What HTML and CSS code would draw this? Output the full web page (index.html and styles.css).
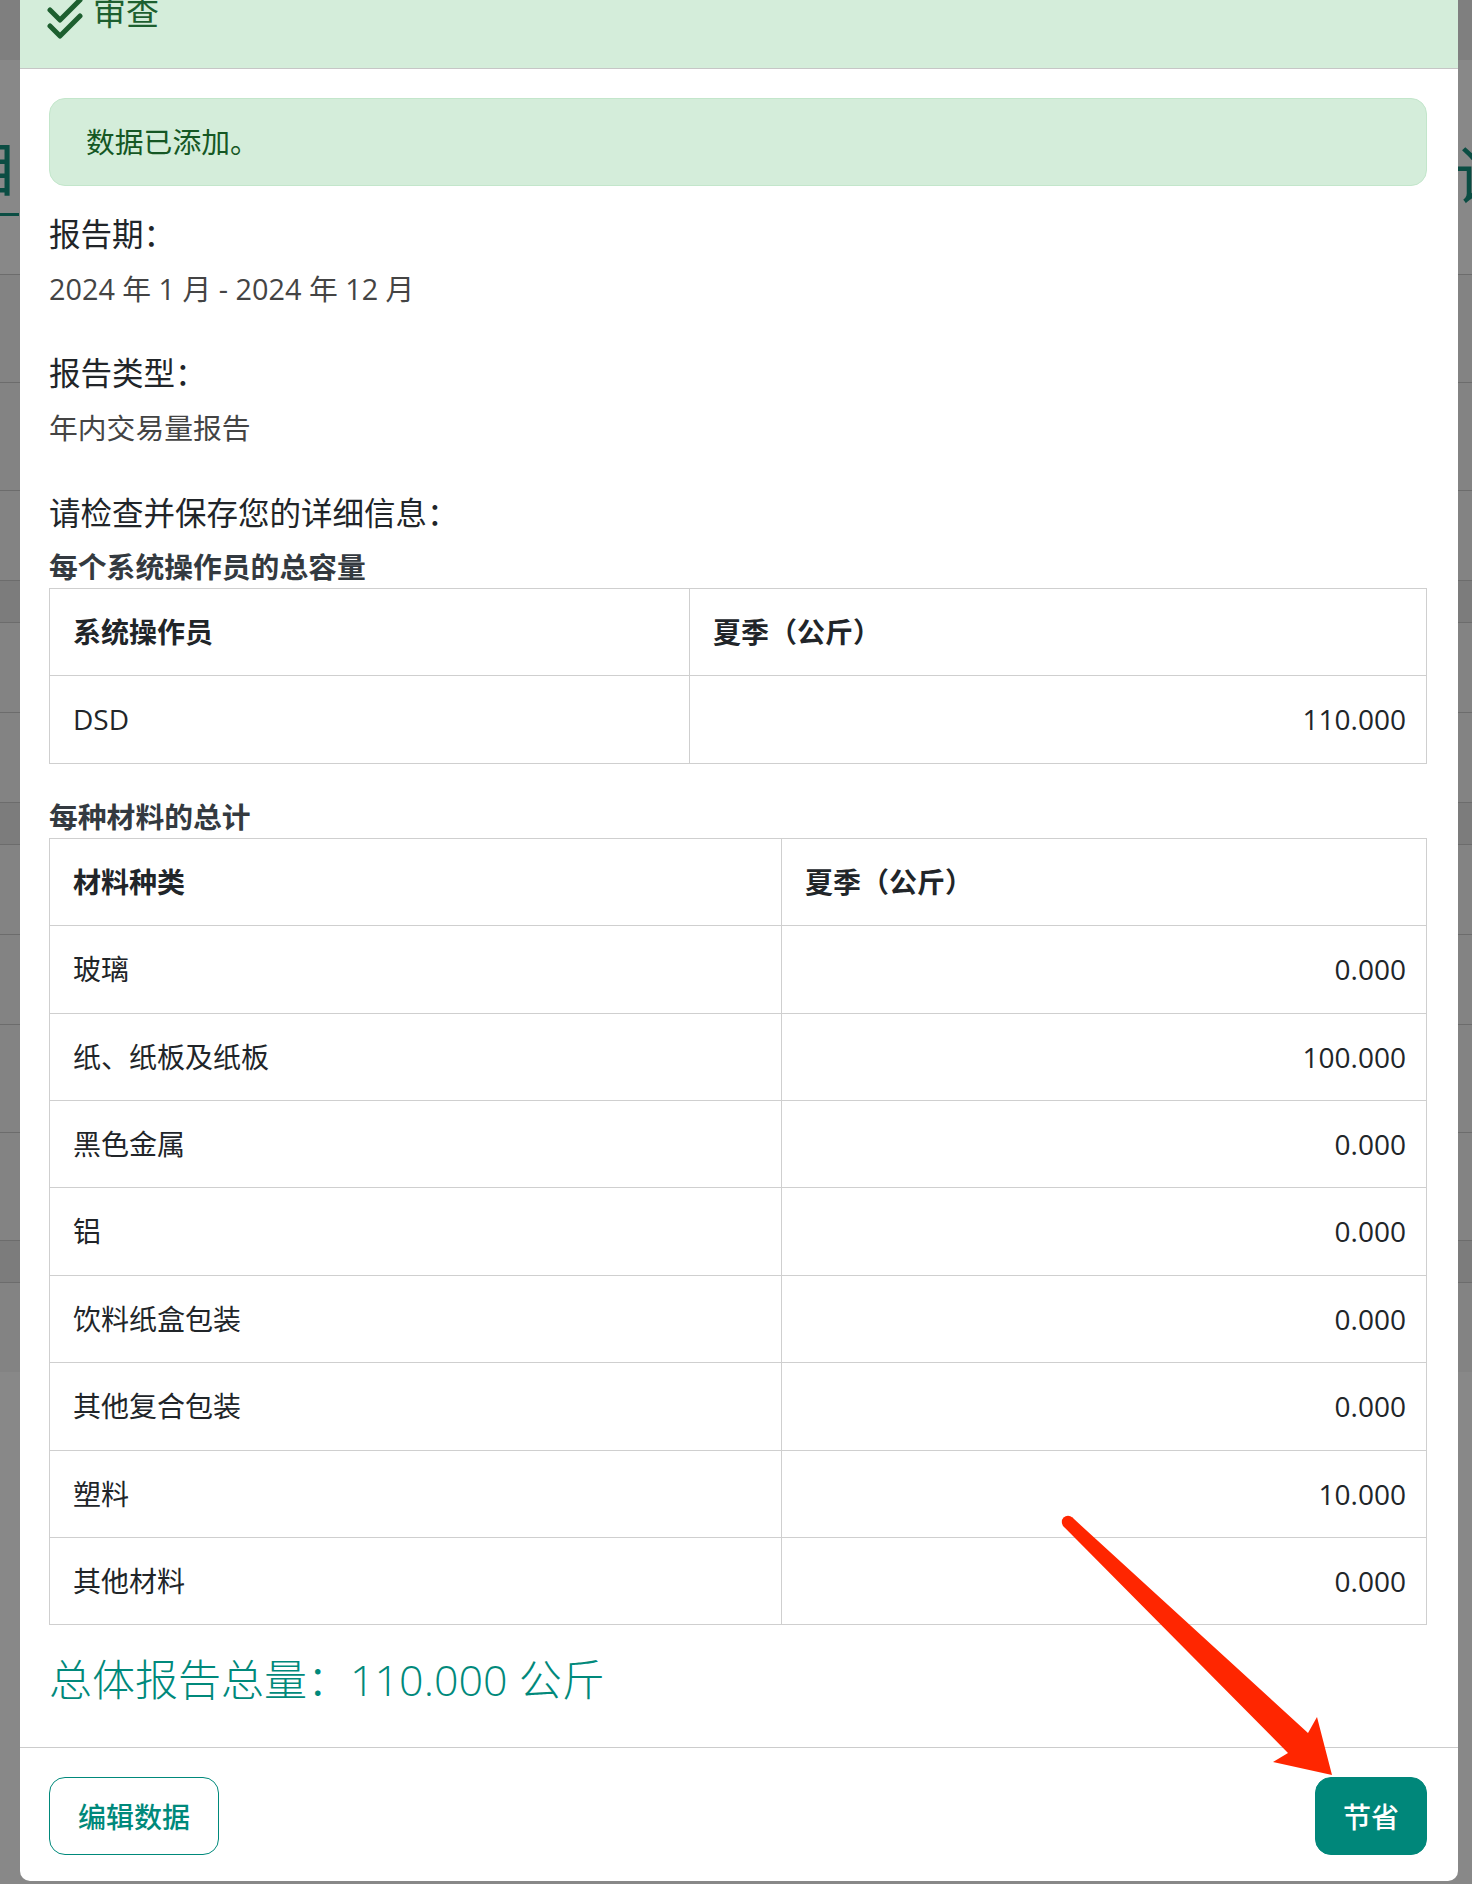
FILE: index.html
```html
<html>
    <head>
        <title>审查</title>
        <meta charset="utf-8">
        <link rel="stylesheet" href="styles.css">
    </head>

    <body>
        <div class="page">
            <div class="page-top"></div>
            <div class="page-title">
                <span class="page-title-left">自</span>
                <span class="page-title-right">认</span>
            </div>
            <div class="page-rows">
                <div class="page-row row-lg"></div>
                <div class="page-row row-lg"></div>
                <div class="page-row row-md"></div>
                <div class="page-row row-sm"></div>
                <div class="page-row row-md"></div>
                <div class="page-row row-md"></div>
                <div class="page-row row-sm"></div>
                <div class="page-row row-md"></div>
                <div class="page-row row-md"></div>
                <div class="page-row row-lg"></div>
                <div class="page-row row-lg"></div>
                <div class="page-row row-sm"></div>
                <div class="page-row row-md"></div>
            </div>
        </div>

        <div class="modal">
            <div class="modal-header">
                <svg class="check-icon" width="36" height="44" viewBox="0 0 36 44">
                    <polyline points="3,13 13,23 33,3" />
                    <polyline points="3,29 13,39 33,19" />
                </svg>
                <h4 class="modal-title">审查</h4>
            </div>

            <div class="modal-body">
                <div class="alert">数据已添加。</div>

                <div class="label first">报告期：</div>
                <div class="value">2024 年 1 月 - 2024 年 12 月</div>

                <div class="label">报告类型：</div>
                <div class="value">年内交易量报告</div>

                <div class="label prompt">请检查并保存您的详细信息：</div>

                <div class="caption">每个系统操作员的总容量</div>
                <table class="data-table">
                    <colgroup>
                        <col class="col-operator">
                        <col>
                    </colgroup>
                    <tr>
                        <th>系统操作员</th>
                        <th>夏季（公斤）</th>
                    </tr>
                    <tr>
                        <td>DSD</td>
                        <td class="num">110.000</td>
                    </tr>
                </table>

                <div class="caption second">每种材料的总计</div>
                <table class="data-table">
                    <colgroup>
                        <col class="col-material">
                        <col>
                    </colgroup>
                    <tr>
                        <th>材料种类</th>
                        <th>夏季（公斤）</th>
                    </tr>
                    <tr><td>玻璃</td><td class="num">0.000</td></tr>
                    <tr><td>纸、纸板及纸板</td><td class="num">100.000</td></tr>
                    <tr><td>黑色金属</td><td class="num">0.000</td></tr>
                    <tr><td>铝</td><td class="num">0.000</td></tr>
                    <tr><td>饮料纸盒包装</td><td class="num">0.000</td></tr>
                    <tr><td>其他复合包装</td><td class="num">0.000</td></tr>
                    <tr><td>塑料</td><td class="num">10.000</td></tr>
                    <tr><td>其他材料</td><td class="num">0.000</td></tr>
                </table>

                <div class="total">总体报告总量：110.000 公斤</div>
            </div>

            <div class="modal-footer">
                <button class="btn btn-outline">编辑数据</button>
                <button class="btn btn-primary">节省</button>
            </div>
        </div>

        <svg class="arrow" width="1472" height="1884" viewBox="0 0 1472 1884">
            <circle cx="1068" cy="1522" r="6.2" />
            <polygon points="1063.6,1526.4 1072.4,1517.6 1308,1733 1317,1717 1332,1775 1273,1762 1288,1753" />
        </svg>
    </body>
</html>
```

FILE: styles.css
```css
html {
    overflow: hidden;
}

body {
    margin: 0;
    background: #888888;
    font-family: "Open Sans", "Noto Sans CJK SC", sans-serif;
    font-size: 28.8px;
    line-height: 42px;
    color: #212529;
}

/* page behind the dialog */

.page {
    position: fixed;
    top: 0;
    left: 0;
    right: 0;
    bottom: 0;
    z-index: 0;
    overflow: hidden;
}

.page-top {
    height: 60px;
    background: #7f7f7f;
}

.page-title {
    display: flex;
    justify-content: space-between;
    margin: 76px -45px 0 -45px;
    font-size: 64px;
    line-height: 80px;
    color: #0b4d43;
}

.page-title-left {
    border-bottom: 3px solid #0b4d43;
    line-height: 60px;
}

.page-rows {
    margin-top: 58px;
}

.page-row {
    border-top: 1px solid #6c6c6c;
    background: #838383;
}

.row-lg {
    height: 107px;
}

.row-md {
    height: 89px;
}

.row-sm {
    height: 41px;
    background: #7c7c7c;
}

/* dialog */

.modal {
    position: relative;
    z-index: 1;
    margin: -32px 14px 0 20px;
    background: #ffffff;
    border-radius: 0 0 10px 10px;
}

.modal-header {
    display: flex;
    align-items: flex-end;
    gap: 10px;
    height: 100px;
    padding: 0 29px 0 27px;
    background: #d4edda;
    border-bottom: 1px solid #c6c6c6;
    box-sizing: content-box;
}

.check-icon {
    margin-bottom: 27px;
}

.check-icon polyline {
    fill: none;
    stroke: #1d5f2f;
    stroke-width: 5;
    stroke-linecap: round;
    stroke-linejoin: round;
}

.modal-title {
    margin: 0 0 35px 0;
    font-size: 33px;
    line-height: 40px;
    font-weight: 400;
    color: #1d5f2f;
}

.modal-body {
    padding: 29px 31px 41px 29px;
}

.alert {
    padding: 22px 36px;
    border: 1px solid #c3e6cb;
    border-radius: 16px;
    background: #d4edda;
    color: #155724;
}

.label {
    margin-top: 44px;
    font-size: 31.5px;
    line-height: 38px;
    color: #212529;
}

.label.first {
    margin-top: 29px;
}

.label.prompt {
    margin-top: 45px;
}

.value {
    margin-top: 15px;
    color: #444444;
}

.caption {
    margin-top: 14px;
    font-weight: bold;
    color: #343a40;
}

.caption.second {
    margin-top: 32px;
}

.data-table {
    width: 100%;
    border-collapse: collapse;
    table-layout: fixed;
    font-family: inherit;
    font-size: 28px;
    color: #212529;
}

.col-operator {
    width: 640px;
}

.col-material {
    width: 732px;
}

.data-table th,
.data-table td {
    padding: 22px 20px 22.4px 23px;
    border: 1px solid #cfcfcf;
    text-align: left;
    line-height: 42px;
}

.data-table th {
    font-weight: 600;
}

.data-table td.num {
    text-align: right;
}

.total {
    margin-top: 28px;
    font-size: 43px;
    line-height: 53px;
    font-weight: 300;
    color: #00897b;
}

.modal-footer {
    display: flex;
    justify-content: space-between;
    padding: 29px 31px 26px 29px;
    border-top: 1px solid #cccccc;
}

.btn {
    height: 78px;
    border-radius: 16px;
    font-family: "Open Sans", "Noto Sans CJK SC", sans-serif;
    font-size: 28px;
    font-weight: 500;
    box-sizing: border-box;
}

.btn-outline {
    padding: 0 28px;
    border: 1.5px solid #00897b;
    background: #ffffff;
    color: #00897b;
}

.btn-primary {
    padding: 0 27px;
    border: 1.5px solid #00877a;
    background: #00877a;
    color: #ffffff;
}

/* annotation arrow */

.arrow {
    position: absolute;
    top: 0;
    left: 0;
    z-index: 2;
    pointer-events: none;
}

.arrow circle,
.arrow polygon {
    fill: #ff2600;
}
```
